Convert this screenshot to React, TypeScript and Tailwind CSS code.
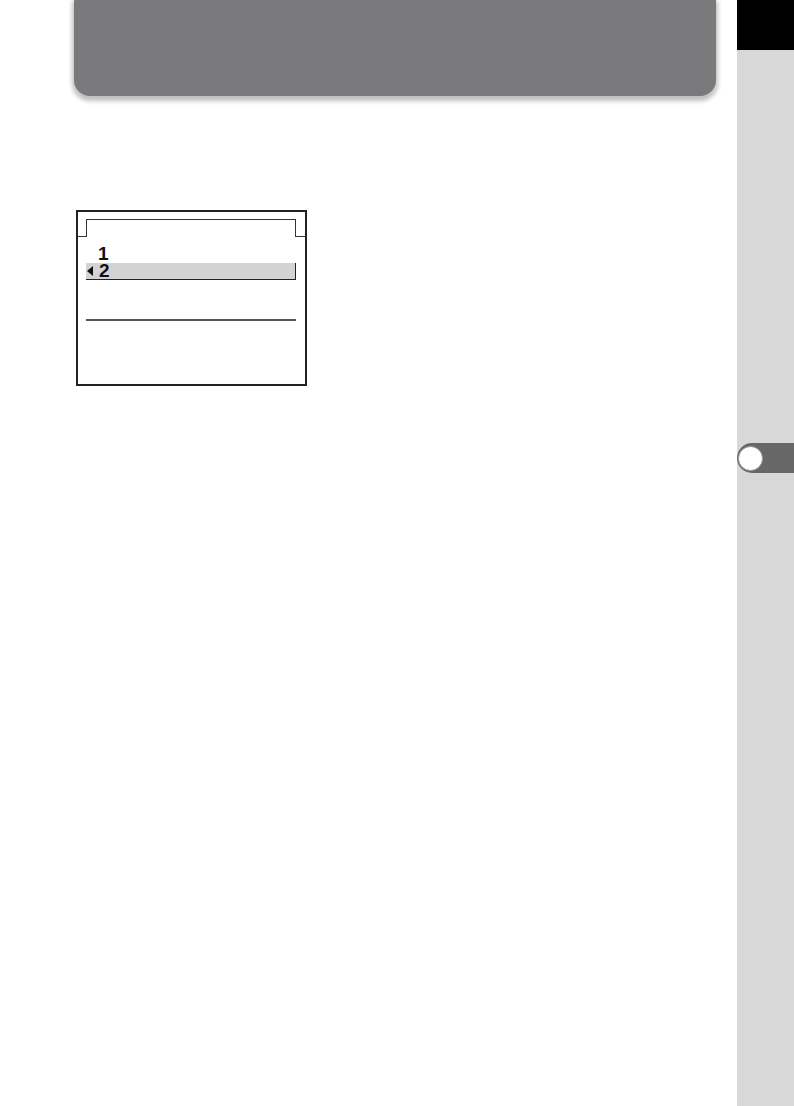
export default function App() {
  return (
    <div className="flex w-[794px] min-h-[1106px] bg-white font-['Liberation_Sans',Arial,sans-serif]">
      {/* Page body */}
      <main className="flex-1 flex flex-col">
        {/* Chapter banner */}
        <div className="ml-[74px] mr-[21px] h-[96px] rounded-b-[16px] bg-[#7a7a7c] shadow-[0_3px_4px_2px_rgba(0,0,0,0.25)]" />

        {/* Camera menu screen */}
        <div className="ml-[76px] mt-[114px] w-[231px] h-[176px] border-2 border-[#222] flex flex-col">
          <div className="flex h-[25px]">
            <div className="w-[8px] border-b-[1.5px] border-[#333]" />
            <div className="flex-1 mt-[7px] border-t-[1.5px] border-x-[1.5px] border-[#333]" />
            <div className="w-[9px] border-b-[1.5px] border-[#333]" />
          </div>
          <div className="pl-[8px] pr-[9px] text-[19px] font-bold text-[#111]">
            <div className="mt-[8px] h-[18px] leading-[18px] pl-[12px]">1</div>
            <div className="h-[17px] leading-[16px] bg-[#d3d3d3] border-b-[1.5px] border-r-[1.5px] border-[#222] flex items-center">
              <span className="ml-[1px] w-0 h-0 border-y-[5px] border-y-transparent border-r-[6px] border-r-[#111]" />
              <span className="ml-[6px]">2</span>
            </div>
            <div className="mt-[39px] h-[2px] bg-[#555]" />
          </div>
        </div>
      </main>

      {/* Chapter index sidebar */}
      <aside className="w-[57px] bg-[#d8d8d8] flex flex-col">
        <div className="h-[50px] bg-black" />
        <div className="mt-[393px] h-[30px] rounded-l-full bg-[#676767] flex items-center pl-[1px]">
          <div className="w-[25px] h-[25px] rounded-full bg-white border border-[#9a9a9a]" />
        </div>
      </aside>
    </div>
  );
}
